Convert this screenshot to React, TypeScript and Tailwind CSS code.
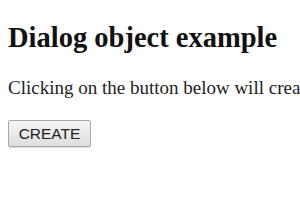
export default function App() {
  return (
    <div className="min-h-[210px] overflow-hidden bg-white px-2 pt-[22px] text-black [font-family:'Liberation_Serif','Times_New_Roman',serif]">
      <h1 className="text-[28.5px] font-bold leading-8 text-[#111]">Dialog object example</h1>
      <p className="mt-[22px] whitespace-nowrap text-[19px] leading-6 text-[#222]">
        Clicking on the button below will create a dialog object.
      </p>
      <button className="mt-[20px] h-[27px] w-[83px] rounded-[2px] border border-[#a9a9a9] bg-gradient-to-b from-[#f6f6f6] to-[#dedede] text-[15.5px] text-[#222] shadow-[0_1px_1px_rgba(0,0,0,0.15)] [font-family:'Liberation_Sans',Arial,sans-serif]">
        CREATE
      </button>
    </div>
  );
}
